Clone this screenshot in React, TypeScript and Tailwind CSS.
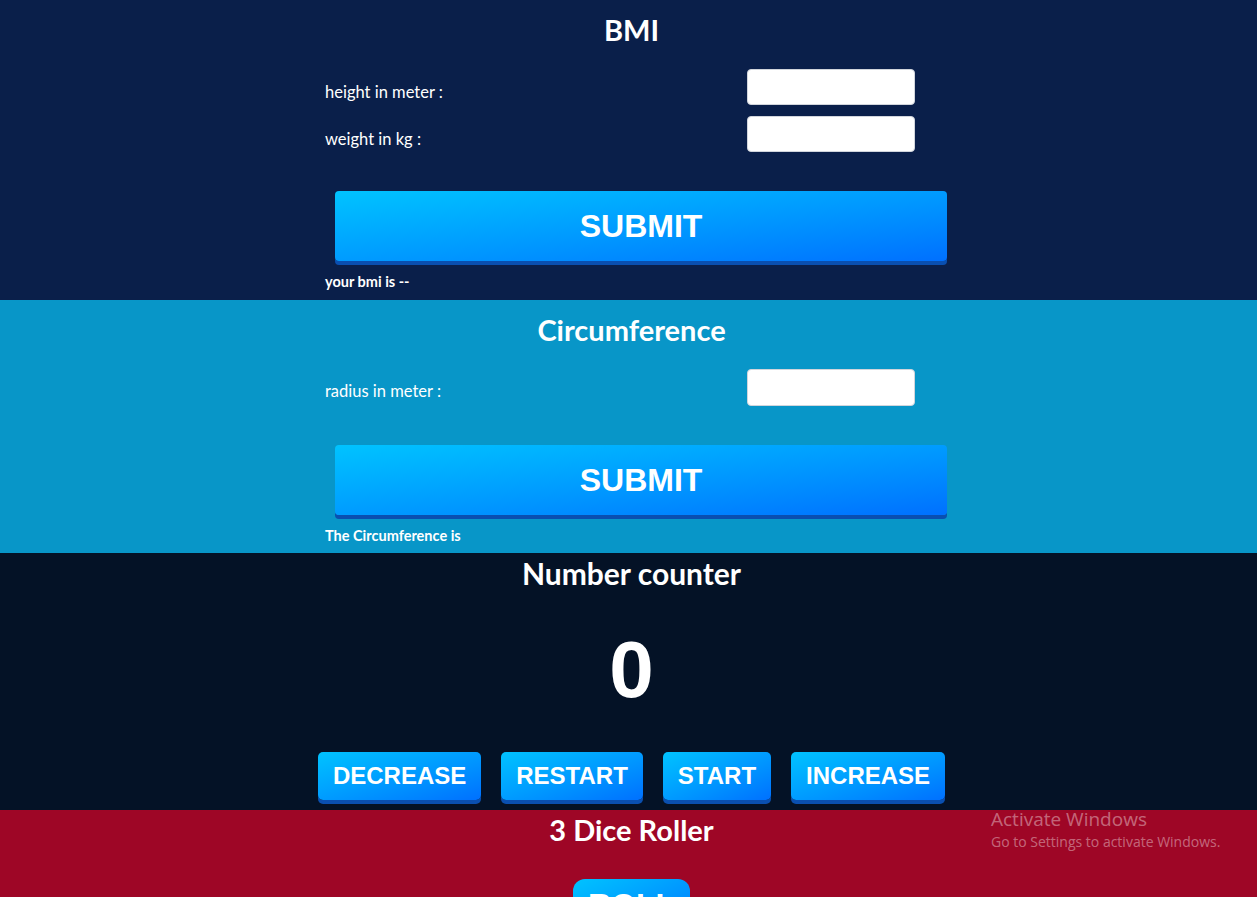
import { useState } from 'react';

const titleFont = { fontFamily: 'Lato, "Open Sans", sans-serif' };
const btnFont = { fontFamily: '"Liberation Sans", Arial, sans-serif' };

function GradientButton({
  children,
  className,
  onClick,
}: {
  children: React.ReactNode;
  className: string;
  onClick?: () => void;
}) {
  return (
    <button
      onClick={onClick}
      style={btnFont}
      className={`bg-gradient-to-br from-[#00c3ff] to-[#0070ff] text-white font-bold shadow-[0_4px_0_#0a4fb0] ${className}`}
    >
      {children}
    </button>
  );
}

export default function App() {
  const [height, setHeight] = useState('');
  const [weight, setWeight] = useState('');
  const [radius, setRadius] = useState('');
  const [count, setCount] = useState(0);

  return (
    <div className="min-h-screen relative overflow-hidden" style={titleFont}>
      {/* BMI */}
      <section className="bg-[#0a1f4a] h-[300px] flex flex-col">
        <h1 className="h-[60px] pl-[6px] flex items-center justify-center text-white font-bold text-[29px]">BMI</h1>
        <div className="w-[607px] mx-auto mt-[9px] flex flex-col gap-[11px]">
          <div className="flex items-center justify-between pr-[17px]">
            <label className="text-white text-[16.5px] mt-[11px]">height in meter :</label>
            <input
              value={height}
              onChange={(e) => setHeight(e.target.value)}
              className="w-[168px] h-[36px] bg-white rounded-[4px] border border-gray-300"
            />
          </div>
          <div className="flex items-center justify-between pr-[17px]">
            <label className="text-white text-[16.5px] mt-[11px]">weight in kg :</label>
            <input
              value={weight}
              onChange={(e) => setWeight(e.target.value)}
              className="w-[168px] h-[36px] bg-white rounded-[4px] border border-gray-300"
            />
          </div>
        </div>
        <div className="w-[607px] mx-auto mt-[39px]">
          <GradientButton className="ml-[10px] w-[612px] h-[70px] rounded-[4px] text-[32px]">SUBMIT</GradientButton>
          <p className="text-white font-bold text-[14.5px] mt-[10px]">your bmi is --</p>
        </div>
      </section>

      {/* Circumference */}
      <section className="bg-[#0896c8] h-[253px] flex flex-col">
        <h1 className="h-[60px] pl-[6px] flex items-center justify-center text-white font-bold text-[29px]">Circumference</h1>
        <div className="w-[607px] mx-auto mt-[9px]">
          <div className="flex items-center justify-between pr-[17px]">
            <label className="text-white text-[16.5px] mt-[7px]">radius in meter :</label>
            <input
              value={radius}
              onChange={(e) => setRadius(e.target.value)}
              className="w-[168px] h-[37px] bg-white rounded-[4px] border border-gray-300"
            />
          </div>
        </div>
        <div className="w-[607px] mx-auto mt-[39px]">
          <GradientButton className="ml-[10px] w-[612px] h-[70px] rounded-[4px] text-[32px]">SUBMIT</GradientButton>
          <p className="text-white font-bold text-[14.5px] mt-[10px]">The Circumference is</p>
        </div>
      </section>

      {/* Number counter */}
      <section className="bg-[#041226] h-[257px] flex flex-col">
        <h1 className="h-[40px] pl-[6px] flex items-center justify-center text-white font-bold text-[30px]">Number counter</h1>
        <div style={btnFont} className="h-[159px] pl-[6px] pb-[6px] flex items-center justify-center text-white font-bold text-[80px]">
          {count}
        </div>
        <div className="flex justify-center gap-[20px] ml-[6px]">
          <GradientButton onClick={() => setCount(count - 1)} className="h-[48px] px-[15px] rounded-[5px] text-[24px]">
            DECREASE
          </GradientButton>
          <GradientButton onClick={() => setCount(0)} className="h-[48px] px-[15px] rounded-[5px] text-[24px]">
            RESTART
          </GradientButton>
          <GradientButton className="h-[48px] px-[15px] rounded-[5px] text-[24px]">START</GradientButton>
          <GradientButton onClick={() => setCount(count + 1)} className="h-[48px] px-[15px] rounded-[5px] text-[24px]">
            INCREASE
          </GradientButton>
        </div>
      </section>

      {/* Dice roller */}
      <section className="bg-[#9e0626] min-h-[200px] flex flex-col">
        <h1 className="h-[40px] pl-[6px] flex items-center justify-center text-white font-bold text-[29px]">3 Dice Roller</h1>
        <div className="flex justify-center mt-[29px] pl-[6px]">
          <GradientButton className="h-[60px] w-[117px] rounded-[12px] text-[32px] leading-none flex items-start justify-center pt-[10px]">
            ROLL
          </GradientButton>
        </div>
      </section>

      {/* Windows watermark */}
      <div
        className="absolute left-[991px] top-[806px] text-white/40 pointer-events-none"
        style={{ fontFamily: '"Open Sans", "Noto Sans", sans-serif' }}
      >
        <div className="text-[19px] leading-[26px]">Activate Windows</div>
        <div className="text-[14px] leading-[20px]">Go to Settings to activate Windows.</div>
      </div>
    </div>
  );
}
